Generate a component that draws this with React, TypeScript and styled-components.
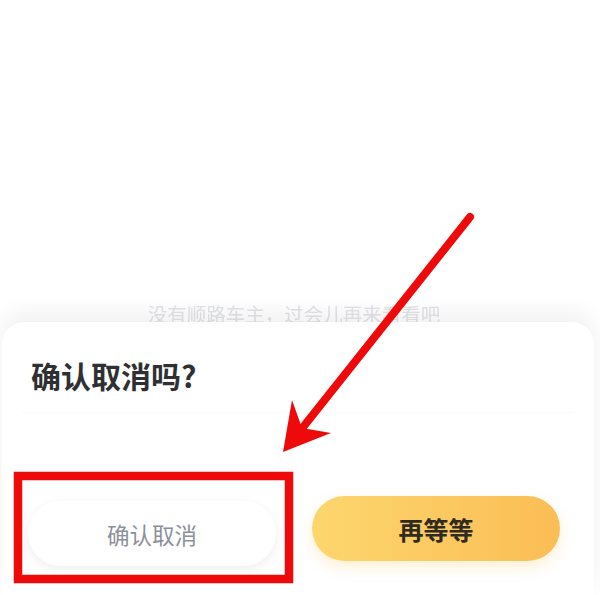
import React from 'react';
import styled, { createGlobalStyle } from 'styled-components';

const GlobalStyle = createGlobalStyle`
  html, body {
    margin: 0;
    padding: 0;
    background: #ffffff;
    font-family: "Noto Sans CJK SC", "Noto Sans", sans-serif;
  }
`;

const Screen = styled.div`
  position: relative;
  width: 600px;
  height: 595px;
  overflow: hidden;
  background: #ffffff;
  display: flex;
  flex-direction: column;
`;

const Backdrop = styled.div`
  height: 322px;
  display: flex;
  align-items: flex-end;
  justify-content: center;
  flex-shrink: 0;
`;

const HintText = styled.div`
  font-size: 19.5px;
  color: #e2e3e7;
  padding-right: 12px;
  margin-bottom: -6px;
  filter: blur(0.6px);
`;

const Sheet = styled.div`
  flex: 1;
  margin: 0 6px 0 2px;
  background: #ffffff;
  border-radius: 22px 22px 0 0;
  box-shadow: 0 -10px 22px rgba(0, 0, 0, 0.06);
  padding: 34px 0 0 0;
  display: flex;
  flex-direction: column;
  position: relative;
  z-index: 1;
`;

const Title = styled.h2`
  margin: 0 0 0 29px;
  font-size: 30px;
  line-height: 38px;
  font-weight: 700;
  color: #2e3033;
`;

const Divider = styled.div`
  margin: 18px 20px 0 20px;
  height: 1px;
  background: #f8f8f9;
`;

const Actions = styled.div`
  display: flex;
  gap: 36px;
  padding: 88px 0 0 26px;
`;

const PillButton = styled.button<{ $primary?: boolean }>`
  width: 248px;
  height: 65px;
  border: none;
  border-radius: 33px;
  font-family: inherit;
  font-size: ${(p) => (p.$primary ? '25px' : '22.5px')};
  font-weight: ${(p) => (p.$primary ? 700 : 400)};
  color: ${(p) => (p.$primary ? '#2f2a22' : '#8c909a')};
  background: ${(p) =>
    p.$primary ? 'linear-gradient(90deg, #fdd66e 0%, #fbbd55 100%)' : '#ffffff'};
  box-shadow: ${(p) =>
    p.$primary ? '0 6px 14px rgba(251, 190, 80, 0.25)' : '0 3px 12px rgba(0, 0, 0, 0.07)'};
  margin-top: ${(p) => (p.$primary ? '-5px' : '0')};
`;

const Annotation = styled.svg`
  position: absolute;
  left: 0;
  top: 0;
  width: 600px;
  height: 595px;
  pointer-events: none;
  z-index: 2;
`;

export default function App() {
  return (
    <>
      <GlobalStyle />
      <Screen>
        <Backdrop>
          <HintText>没有顺路车主，过会儿再来看看吧</HintText>
        </Backdrop>
        <Sheet>
          <Title>确认取消吗?</Title>
          <Divider />
          <Actions>
            <PillButton>确认取消</PillButton>
            <PillButton $primary>再等等</PillButton>
          </Actions>
        </Sheet>
        <Annotation viewBox="0 0 600 595">
          <line x1="470" y1="217" x2="296" y2="436" stroke="#ee0a0a" strokeWidth="8" strokeLinecap="round" />
          <path d="M283 452 L292 400 L302 428 L331 433 Z" fill="#ee0a0a" />
          <rect x="18" y="476" width="271" height="103" fill="none" stroke="#ee0a0a" strokeWidth="8.5" />
        </Annotation>
      </Screen>
    </>
  );
}
